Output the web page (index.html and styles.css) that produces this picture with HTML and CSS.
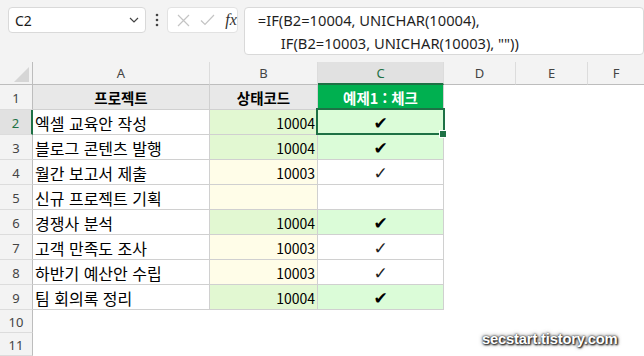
FILE: index.html
```html
<!DOCTYPE html>
<html lang="ko">
<head>
<meta charset="utf-8">
<link rel="stylesheet" href="styles.css">
</head>
<body>
<div class="app">
  <div class="topbar">
    <div class="namebox">
      <span class="ref">C2</span>
      <svg class="chev" width="10" height="6" viewBox="0 0 10 6"><path d="M1 1 L5 5 L9 1" fill="none" stroke="#444" stroke-width="1.2"/></svg>
    </div>
    <div class="dots">
      <svg width="4" height="14" viewBox="0 0 4 14"><circle cx="2" cy="2" r="1.3" fill="#444"/><circle cx="2" cy="7" r="1.3" fill="#444"/><circle cx="2" cy="12" r="1.3" fill="#444"/></svg>
    </div>
    <div class="fxbox">
      <svg width="13" height="13" viewBox="0 0 13 13"><path d="M1 1 L12 12 M12 1 L1 12" stroke="#c4c4c4" stroke-width="1.2" fill="none"/></svg>
      <svg width="15" height="12" viewBox="0 0 15 12"><path d="M1 6.5 L5 10.5 L14 1" stroke="#c4c4c4" stroke-width="1.2" fill="none"/></svg>
      <span class="fx">fx</span>
    </div>
    <div class="formula">
      <div class="fl">=IF(B2=10004, UNICHAR(10004),</div>
      <div class="fl l2">IF(B2=10003, UNICHAR(10003), ""))</div>
    </div>
  </div>

  <div class="sheet">
    <div class="ch corner"><div class="tri"></div></div>
    <div class="ch">A</div>
    <div class="ch">B</div>
    <div class="ch sel">C</div>
    <div class="ch">D</div>
    <div class="ch">E</div>
    <div class="ch last">F</div>

    <div class="rh">1</div>
    <div class="c t hd">프로젝트</div>
    <div class="c t hd">상태코드</div>
    <div class="c t hdg">예제1 : 체크</div>
    <div class="c"></div><div class="c"></div><div class="c"></div>

    <div class="rh sel">2</div>
    <div class="c t txt">엑셀 교육안 작성</div>
    <div class="c t num g">10004</div>
    <div class="c t chk g2 active"><span class="heavy">✔</span></div>
    <div class="c"></div><div class="c"></div><div class="c"></div>

    <div class="rh">3</div>
    <div class="c t txt">블로그 콘텐츠 발행</div>
    <div class="c t num g">10004</div>
    <div class="c t chk g2"><span class="heavy">✔</span></div>
    <div class="c"></div><div class="c"></div><div class="c"></div>

    <div class="rh">4</div>
    <div class="c t txt">월간 보고서 제출</div>
    <div class="c t num y">10003</div>
    <div class="c t chk"><span class="light">✓</span></div>
    <div class="c"></div><div class="c"></div><div class="c"></div>

    <div class="rh">5</div>
    <div class="c t txt">신규 프로젝트 기획</div>
    <div class="c t num y"></div>
    <div class="c t chk"></div>
    <div class="c"></div><div class="c"></div><div class="c"></div>

    <div class="rh">6</div>
    <div class="c t txt">경쟁사 분석</div>
    <div class="c t num g">10004</div>
    <div class="c t chk g2"><span class="heavy">✔</span></div>
    <div class="c"></div><div class="c"></div><div class="c"></div>

    <div class="rh">7</div>
    <div class="c t txt">고객 만족도 조사</div>
    <div class="c t num y">10003</div>
    <div class="c t chk"><span class="light">✓</span></div>
    <div class="c"></div><div class="c"></div><div class="c"></div>

    <div class="rh">8</div>
    <div class="c t txt">하반기 예산안 수립</div>
    <div class="c t num y">10003</div>
    <div class="c t chk"><span class="light">✓</span></div>
    <div class="c"></div><div class="c"></div><div class="c"></div>

    <div class="rh">9</div>
    <div class="c t txt">팀 회의록 정리</div>
    <div class="c t num g">10004</div>
    <div class="c t chk g2"><span class="heavy">✔</span></div>
    <div class="c"></div><div class="c"></div><div class="c"></div>

    <div class="rh">10</div>
    <div class="c"></div><div class="c"></div><div class="c"></div>
    <div class="c"></div><div class="c"></div><div class="c"></div>

    <div class="rh">11</div>
    <div class="c"></div><div class="c"></div><div class="c"></div>
    <div class="c"></div><div class="c"></div><div class="c"></div>
  </div>

  <div class="watermark">secstart.tistory.com</div>
</div>
</body>
</html>
```

FILE: styles.css
```css
* { box-sizing: border-box; }
html, body { margin: 0; padding: 0; }
body {
  width: 644px;
  height: 356px;
  overflow: hidden;
  background: #ffffff;
  font-family: "Noto Sans CJK KR", "Noto Sans", sans-serif;
}
.app { position: relative; width: 644px; height: 356px; overflow: hidden; }

.topbar {
  height: 62px;
  background: #f3f3f3;
  display: flex;
  align-items: flex-start;
  padding: 7px 0 0 8px;
}
.namebox {
  width: 141px;
  height: 26px;
  background: #fff;
  border: 1px solid #d9d9d9;
  border-radius: 4px;
  display: flex;
  align-items: center;
  justify-content: space-between;
  padding: 0 6px 0 6px;
}
.ref {
  font-family: "Noto Sans", sans-serif;
  font-size: 14px;
  color: #1a1a1a;
}
.dots {
  width: 22px;
  height: 26px;
  display: flex;
  align-items: center;
  justify-content: center;
}
.fxbox {
  width: 72px;
  height: 26px;
  background: #fff;
  border: 1px solid #e2e2e2;
  border-radius: 4px;
  display: flex;
  align-items: center;
  gap: 10px;
  padding-left: 9px;
}
.fx {
  font-family: "Liberation Serif", serif;
  font-style: italic;
  font-size: 16px;
  color: #333;
  margin-left: 0;
}
.formula {
  margin-left: 6px;
  width: 410px;
  height: 48px;
  background: #fff;
  border: 1px solid #d9d9d9;
  border-radius: 4px;
  padding: 1px 0 0 13px;
}
.fl {
  font-family: "Noto Sans", sans-serif;
  font-size: 14.7px;
  line-height: 23px;
  color: #1f1f1f;
  white-space: pre;
}
.l2 { padding-left: 23px; }

.sheet {
  display: grid;
  grid-template-columns: 33px 177px 108px 126px 72px 72px 1fr;
  grid-template-rows: 23px repeat(9, 25px) 23px 23px;
}
.ch {
  background: #f3f3f3;
  border-right: 1px solid #dcdcdc;
  border-bottom: 1px solid #bdbdbd;
  display: flex;
  align-items: center;
  justify-content: center;
  font-family: "Noto Sans", sans-serif;
  font-size: 13px;
  color: #444;
}
.ch.corner {
  border-right: 1px solid #bdbdbd;
  align-items: flex-end;
  justify-content: flex-end;
  padding: 0 3px 2px 0;
}
.tri {
  width: 15px;
  height: 15px;
  background: #d6d6d6;
  clip-path: polygon(100% 0, 100% 100%, 0 100%);
}
.ch.sel {
  background: #e1e1e1;
  color: #1e7145;
  border-bottom: 2px solid #1e7145;
}
.ch.last { border-right: none; }

.rh {
  background: #f3f3f3;
  border-right: 1px solid #bdbdbd;
  border-bottom: 1px solid #dcdcdc;
  display: flex;
  align-items: center;
  justify-content: center;
  padding-top: 2px;
  font-family: "Noto Sans", sans-serif;
  font-size: 13px;
  color: #444;
}
.rh.sel {
  background: #e1e1e1;
  color: #1e7145;
  border-right: 2px solid #1e7145;
}

.c { background: #fff; }
.t {
  border-right: 1px solid #d0d0d0;
  border-bottom: 1px solid #d0d0d0;
  display: flex;
  align-items: center;
  font-size: 14.5px;
  color: #000;
  padding-top: 1px;
}
.hd {
  background: #e8e8e8;
  font-weight: 700;
  justify-content: center;
}
.hdg {
  background: #00b050;
  color: #fff;
  font-weight: 700;
  justify-content: center;
}
.txt { padding-left: 2px; font-size: 16px; }
.num { justify-content: flex-end; padding-right: 2px; font-size: 14px; }
.g { background: #e2f8d2; }
.y { background: #fffde8; }
.g2 { background: #dbfcd8; }
.chk { justify-content: center; }
.heavy {
  font-family: "DejaVu Sans", sans-serif;
  font-size: 17px;
  color: #000;
}
.light {
  font-family: "DejaVu Sans", sans-serif;
  font-size: 17px;
  color: #222;
}
.active { position: relative; }
.active::after {
  content: "";
  position: absolute;
  left: -2px;
  top: -2px;
  right: -2px;
  bottom: -1px;
  border: 2px solid #1e7145;
}
.active::before {
  content: "";
  position: absolute;
  right: -4px;
  bottom: -4px;
  width: 6px;
  height: 6px;
  background: #1e7145;
  border: 1px solid #fff;
  z-index: 2;
}

.watermark {
  position: absolute;
  left: 482px;
  top: 331px;
  font-family: "Liberation Sans", sans-serif;
  font-weight: 700;
  font-size: 14.8px;
  letter-spacing: -0.2px;
  color: #fff;
  text-shadow: 0 0 2px #222, 1px 1px 2px #000, 0 0 4px #555;
}
```
